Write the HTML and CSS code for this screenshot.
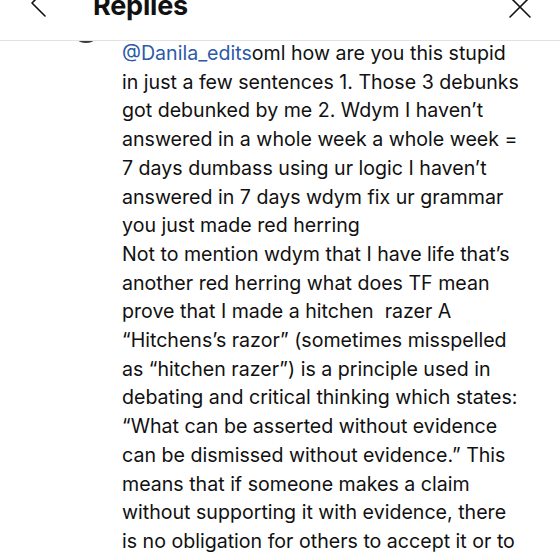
FILE: index.html
```html
<!DOCTYPE html>
<html>
<head>
<meta charset="utf-8">
<link rel="stylesheet" href="styles.css">
</head>
<body>
<div class="screen">
  <header class="topbar">
    <div class="topbar-row">
      <svg class="icon back" width="20" height="30" viewBox="0 0 20 30"><polyline points="16,1 3,14 16,27" fill="none" stroke="#111" stroke-width="1.6" stroke-linecap="round" stroke-linejoin="round"/></svg>
      <h1 class="title">Replies</h1>
      <svg class="icon close" width="24" height="24" viewBox="0 0 24 24"><path d="M2 2 L22 22 M22 2 L2 22" fill="none" stroke="#111" stroke-width="1.6" stroke-linecap="round"/></svg>
    </div>
  </header>
  <main class="thread">
    <div class="comment">
      <div class="avatar"></div>
      <p class="text"><span class="mention">@Danila_edits</span>oml how are you this stupid<br>in just a few sentences 1. Those 3 debunks<br>got debunked by me 2. Wdym I haven’t<br>answered in a whole week a whole week =<br>7 days dumbass using ur logic I haven’t<br>answered in 7 days wdym fix ur grammar<br>you just made red herring<br>Not to mention wdym that I have life that’s<br>another red herring what does TF mean<br>prove that I made a hitchen&nbsp; razer A<br>“Hitchens’s razor” (sometimes misspelled<br>as “hitchen razer”) is a principle used in<br>debating and critical thinking which states:<br>“What can be asserted without evidence<br>can be dismissed without evidence.” This<br>means that if someone makes a claim<br>without supporting it with evidence, there<br>is no obligation for others to accept it or to</p>
    </div>
  </main>
</div>
</body>
</html>
```
FILE: styles.css
```css
html, body {
  margin: 0;
  padding: 0;
  background: #fff;
}
.screen {
  position: relative;
  width: 560px;
  height: 560px;
  overflow: hidden;
  font-family: Inter, "Liberation Sans", sans-serif;
  color: #111;
}
.topbar {
  position: absolute;
  top: 0;
  left: 0;
  right: 0;
  height: 40px;
  background: #fff;
  border-bottom: 1px solid #e2e2e2;
  overflow: hidden;
  z-index: 2;
}
.topbar-row {
  display: flex;
  align-items: center;
  margin-top: -9px;
  padding: 0 28px 0 29px;
}
.back {
  flex: none;
  margin-top: -4px;
}
.title {
  margin: 0 0 0 44px;
  font-size: 27px;
  line-height: 30px;
  font-weight: 700;
  letter-spacing: -0.2px;
  flex: 1;
}
.close {
  flex: none;
  margin-top: 2px;
}
.thread {
  padding-top: 15px;
}
.comment {
  display: flex;
  align-items: flex-start;
  gap: 20px;
  padding-left: 70px;
}
.avatar {
  flex: none;
  width: 32px;
  height: 32px;
  border-radius: 50%;
  background: #3a3a3a;
  margin-top: -4px;
}
.text {
  margin: 24px 0 0 0;
  font-size: 19.6px;
  line-height: 28.7px;
  white-space: nowrap;
}
.mention {
  color: #2c5aa6;
}
```
